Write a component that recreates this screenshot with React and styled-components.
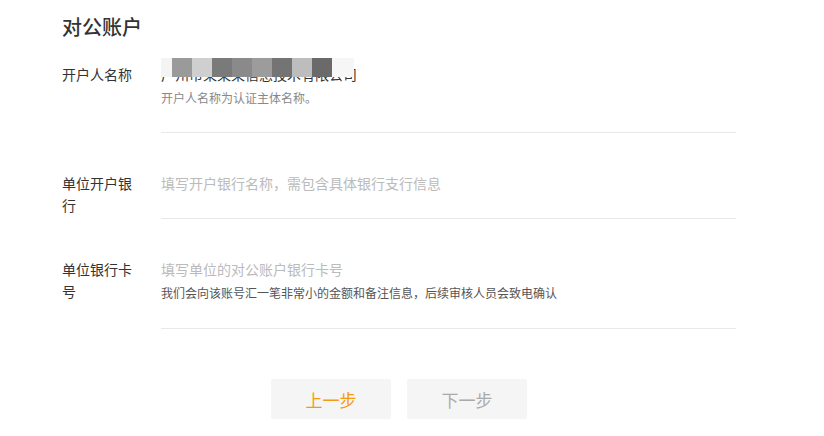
import React from 'react';
import styled, { createGlobalStyle } from 'styled-components';

const GlobalStyle = createGlobalStyle`
  html, body {
    margin: 0;
    padding: 0;
    background: #fff;
  }
  body {
    font-family: 'Noto Sans CJK SC', 'Noto Sans', sans-serif;
    color: #333;
  }
`;

const Page = styled.div`
  padding: 13px 0 0 62px;
`;

const Title = styled.h2`
  margin: 0 0 22px;
  font-size: 20px;
  line-height: 28px;
  font-weight: 500;
  color: #333;
`;

const Form = styled.div`
  width: 674px;
  display: flex;
  flex-direction: column;
`;

const Row = styled.div`
  display: grid;
  grid-template-columns: 99px 1fr;
  padding-top: ${({ first }) => (first ? '0' : '39px')};
`;

const Label = styled.div`
  width: 70px;
  font-size: 14px;
  line-height: 22px;
  color: #333;
`;

const Field = styled.div`
  padding-bottom: ${({ pb }) => pb || 25}px;
  border-bottom: 1px solid #e8e8e8;
`;

const Value = styled.div`
  position: relative;
  font-size: 14px;
  line-height: 22px;
  color: ${({ placeholder }) => (placeholder ? '#bbb' : '#333')};
`;

const Hint = styled.div`
  margin-top: 4px;
  font-size: 12px;
  line-height: 18px;
  color: ${({ dark }) => (dark ? '#555' : '#888')};
`;

const Mosaic = styled.div`
  position: absolute;
  left: 0;
  top: -5px;
  display: flex;
  height: 19px;
`;

const Tile = styled.span`
  width: ${({ w }) => w || 20}px;
  height: 100%;
  background: ${({ shade }) => shade};
`;

const Actions = styled.div`
  display: flex;
  justify-content: center;
  gap: 16px;
  margin-top: 50px;
`;

const StepButton = styled.button`
  width: 120px;
  height: 40px;
  border: none;
  border-radius: 2px;
  background: #f5f5f5;
  font-family: inherit;
  font-size: 17px;
  color: ${({ primary }) => (primary ? '#f39c12' : '#aaa')};
  cursor: pointer;
`;

const tiles = [
  { shade: '#f4f4f4', w: 11 },
  { shade: '#9a9a9a' },
  { shade: '#cfcfcf' },
  { shade: '#7a7a7a' },
  { shade: '#8a8a8a' },
  { shade: '#9c9c9c' },
  { shade: '#747474' },
  { shade: '#bdbdbd' },
  { shade: '#6a6a6a' },
  { shade: '#f6f6f6', w: 22 },
];

export default function App() {
  return (
    <>
      <GlobalStyle />
      <Page>
        <Title>对公账户</Title>
        <Form>
          <Row first>
            <Label>开户人名称</Label>
            <Field pb={25}>
              <Value>
                广州市某某某信息技术有限公司
                <Mosaic>
                  {tiles.map((t, i) => (
                    <Tile key={i} shade={t.shade} w={t.w} />
                  ))}
                </Mosaic>
              </Value>
              <Hint>开户人名称为认证主体名称。</Hint>
            </Field>
          </Row>
          <Row>
            <Label>单位开户银行</Label>
            <Field pb={24}>
              <Value placeholder>填写开户银行名称，需包含具体银行支行信息</Value>
            </Field>
          </Row>
          <Row>
            <Label>单位银行卡号</Label>
            <Field pb={26}>
              <Value placeholder>填写单位的对公账户银行卡号</Value>
              <Hint dark>我们会向该账号汇一笔非常小的金额和备注信息，后续审核人员会致电确认</Hint>
            </Field>
          </Row>
          <Actions>
            <StepButton primary>上一步</StepButton>
            <StepButton>下一步</StepButton>
          </Actions>
        </Form>
      </Page>
    </>
  );
}
